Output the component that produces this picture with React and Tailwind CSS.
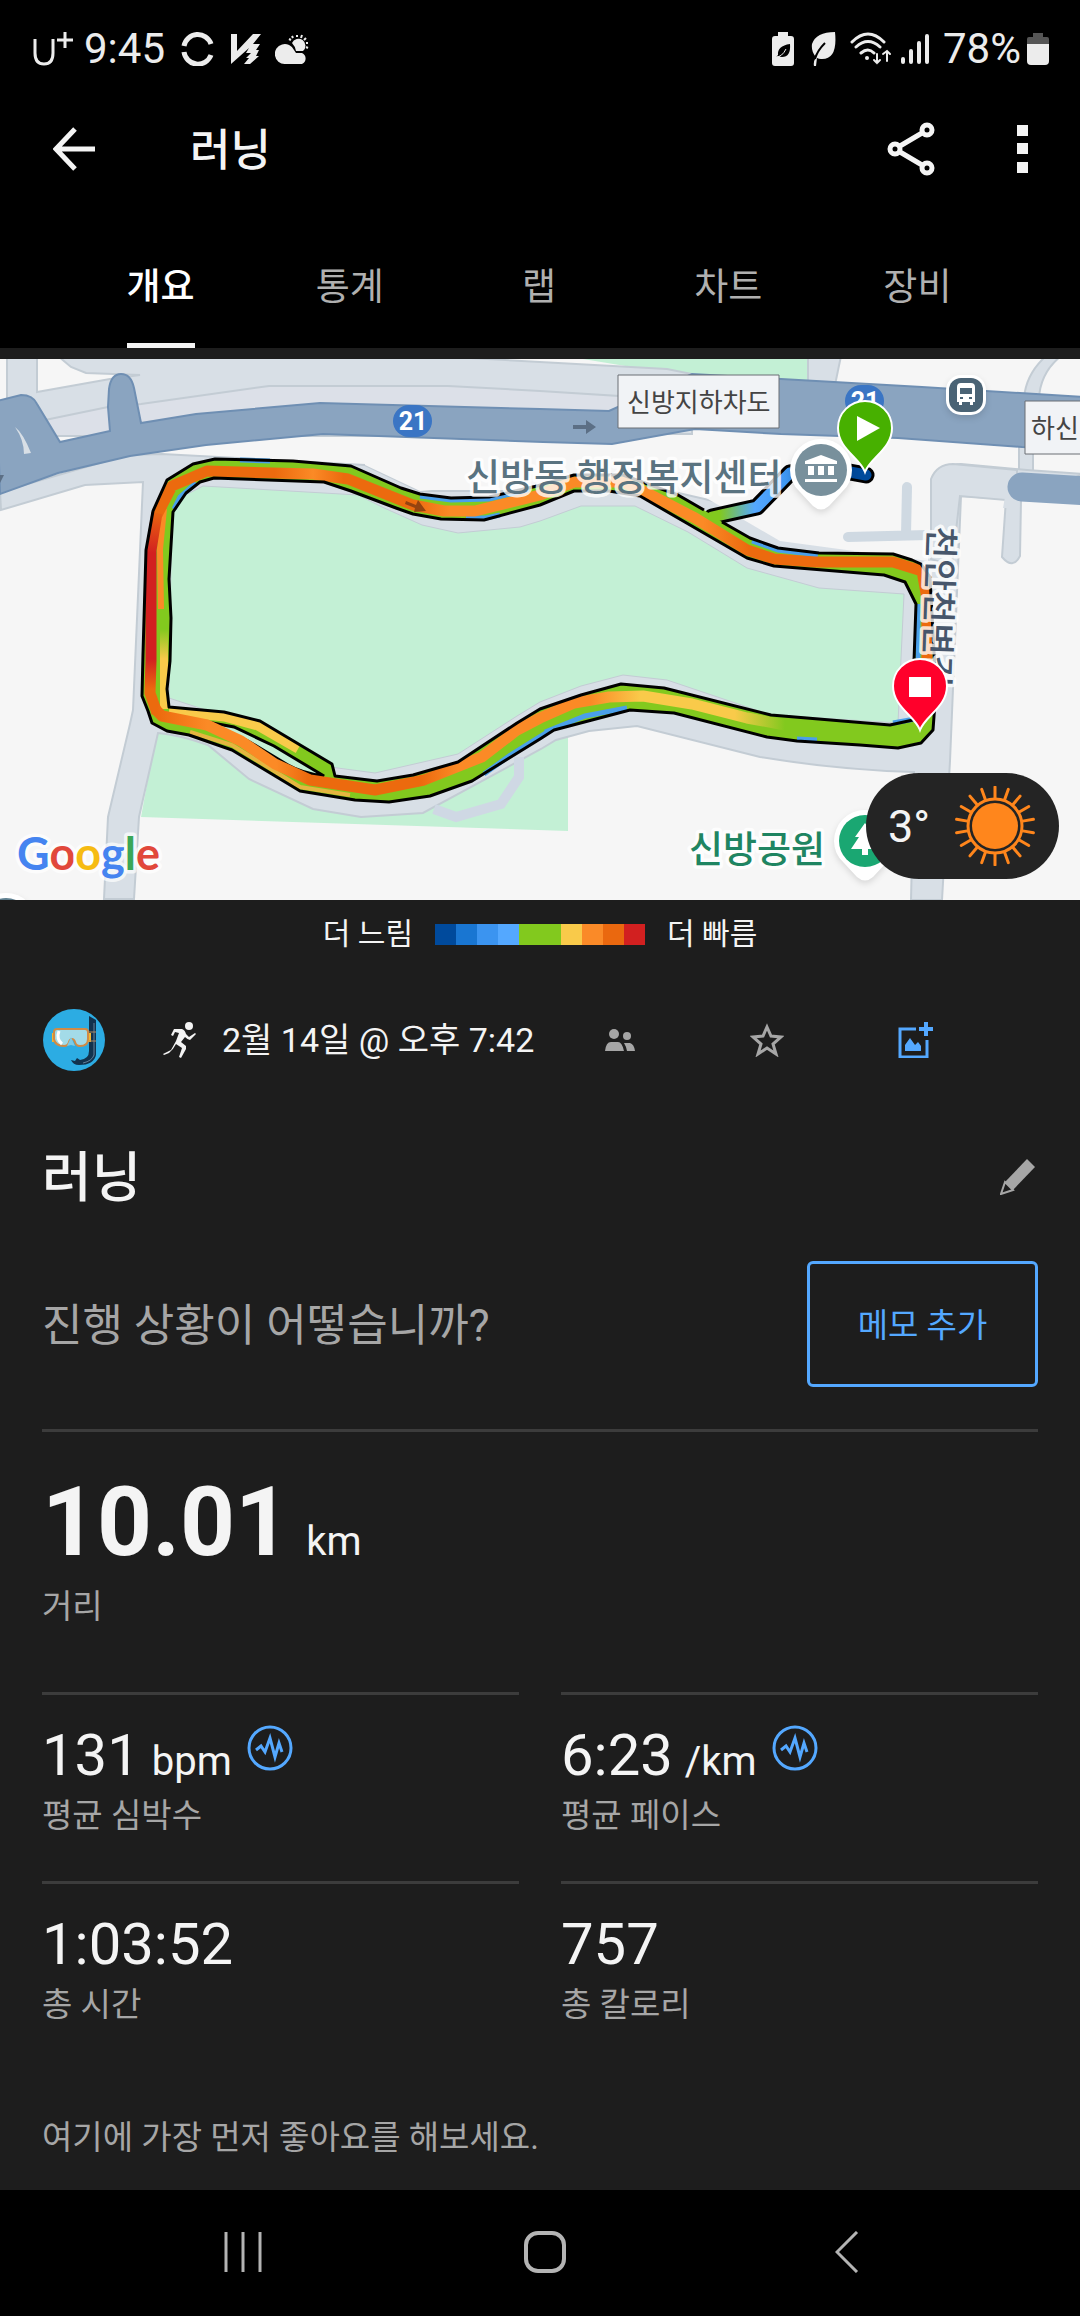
import { useState } from 'react';

const tabs = ['개요', '통계', '랩', '차트', '장비'];

const paceColors = [
  'bg-[#004a9c]',
  'bg-[#1976d2]',
  'bg-[#3b94f0]',
  'bg-[#54a8ff]',
  'bg-[#82c91e]',
  'bg-[#82c91e]',
  'bg-[#f9ca4a]',
  'bg-[#fa8a28]',
  'bg-[#ea680f]',
  'bg-[#d22020]',
];

const stats = [
  { value: '131', unit: 'bpm', label: '평균 심박수', chart: true },
  { value: '6:23', unit: '/km', label: '평균 페이스', chart: true },
  { value: '1:03:52', label: '총 시간' },
  { value: '757', label: '총 칼로리' },
];

// Both edges of the lap loop, the outer one is left open where the start spur joins
const trackEdges =
  'M722 163L750 179 778 189 819 194 893 195 912 201 921 205 930 218 936 330 933 371 921 384 898 389 860 386 797 382 767 378 674 354 630 351 554 371 540 380 472 422 430 437 389 443 355 441 300 432 232 391 189 376 167 372 152 364 148 352 142 337 143 295 146 191 153 152 167 121 193 105 215 100 293 102 351 107 401 129 420 135 451 139 489 138 537 127 574 116 623 116 678 136 704 151M214 119L324 123 351 132 396 149 413 155 441 160 484 161 540 146 574 132 609 132 640 137 747 199 774 207 884 216 905 223 916 245 914 302 913 361 890 366 771 356 664 329 621 325 581 336 540 350 517 364 458 403 413 416 377 422 335 417 332 405 260 362 224 353 169 348 167 330 170 302 171 259 169 220 173 153 186 134 200 123z';

const StatusBar = () => (
  <div className="flex h-[98px] items-center justify-between pl-8 pr-[31px] text-[42px] leading-none text-[#ececec]">
    <div className="flex items-center">
      <svg className="h-[36px] w-[42px]" viewBox="0 0 42 36" fill="none" stroke="currentColor" strokeWidth="3">
        <path d="M3 8v14q0 11 9 11t9-11V8M33 1v16M25 9h16" />
      </svg>
      <span className="ml-[10px]">9:45</span>
      <svg className="ml-4 h-[34px] w-[34px]" viewBox="0 0 34 34" fill="none" stroke="currentColor" strokeWidth="5">
        <path d="M3 14A14 14 0 0 1 30 12M3 20A14 14 0 0 0 30 23" />
      </svg>
      <svg className="ml-4 h-[32px] w-[30px]" viewBox="0 0 30 32" fill="currentColor">
        <path d="M0 1h6v17L22 1h8l-8 10h7l-4 6h3l-3 6h3l-9 8h-6l5-6h-3l5-5h-5l3-5L0 31z" />
      </svg>
      <svg className="ml-[14px] h-[30px] w-[34px]" viewBox="0 0 34 30" fill="currentColor">
        <path d="M10 30a10 10 0 1 1 9-14l2 3h6a6 6 0 0 1 0 11z" />
        <path d="M17 9a7 7 0 1 1 11 8h-7q-1-5-4-8z" />
        <path
          d="M22 1v2M27 1l-1 3M31 4l-2 2M33 9h-2M33 14l-2-1M17 2l1 2M14 5l2 1"
          stroke="currentColor"
          strokeWidth="2"
        />
      </svg>
    </div>
    <div className="flex items-center">
      <svg className="h-[34px] w-[22px]" viewBox="0 0 22 34" fill="currentColor">
        <path d="M6 0h10v4h3q3 0 3 3v24q0 3-3 3H3q-3 0-3-3V7q0-3 3-3h3z" />
        <path d="M18 12q1 13-8 13-2 0-3-1l-3 1q1-1 2-2-1-9 12-11z" fill="#000" />
        <path d="M4 25q6 0 10-8" stroke="#ececec" strokeWidth="1" fill="none" />
      </svg>
      <svg className="ml-[17px] h-[34px] w-[25px]" viewBox="0 0 25 34" fill="currentColor">
        <path d="M24 0q3 28-14 27-2 0-4-1L5 34H3q-1-4 2-9-5-5-4-13Q5 0 24 0z" />
        <path d="M14 11Q6 19 4 27" stroke="#000" strokeWidth="2" fill="none" />
      </svg>
      <svg
        className="ml-[14px] h-[34px] w-[42px]"
        viewBox="0 0 42 34"
        fill="none"
        stroke="currentColor"
        strokeWidth="3"
        strokeLinecap="round"
      >
        <path d="M2 10q16-16 32 0M6 15q12-11 24 0M11 21q7-6 13 0" />
        <path d="M27 22v9M24 28l3 3 3-3M37 29v-9M33 22l4-3 3 3" strokeWidth="2" />
        <circle cx="17" cy="26" r="2" fill="currentColor" stroke="none" />
      </svg>
      <svg
        className="ml-[9px] h-[32px] w-[28px]"
        viewBox="0 0 28 32"
        stroke="currentColor"
        strokeWidth="4"
        strokeLinecap="round"
      >
        <path d="M2 26v3M10 18v11M18 10v19M26 3v26" />
      </svg>
      <span className="ml-[14px]">78%</span>
      <svg className="ml-[6px] h-[32px] w-[22px]" viewBox="0 0 22 32" fill="currentColor">
        <path d="M6 0h10v4h4q2 0 2 2v5H0V6q0-2 2-2h4z" fill="#555" />
        <path d="M0 11h22v17q0 4-4 4H4q-4 0-4-4z" />
      </svg>
    </div>
  </div>
);

const AppBar = () => (
  <header className="flex h-[102px] items-center pl-[53px] pr-[51px] text-[#f4f4f4]">
    <button aria-label="뒤로">
      <svg className="h-[44px] w-[42px]" viewBox="0 0 42 44" fill="none" stroke="currentColor" strokeWidth="5">
        <path d="M42 22H4M22 2L3 22l19 20" />
      </svg>
    </button>
    <h1 className="ml-[95px] pt-1 text-[44px] font-medium leading-none">러닝</h1>
    <button className="ml-auto" aria-label="공유">
      <svg className="h-[54px] w-[48px]" viewBox="0 0 48 54" fill="none" stroke="currentColor" strokeWidth="5">
        <circle cx="8" cy="27" r="5" />
        <circle cx="40" cy="8" r="5" />
        <circle cx="40" cy="46" r="5" />
        <path d="M13 24L35 11M13 30l22 13" />
      </svg>
    </button>
    <button className="ml-[82px]" aria-label="더보기">
      <svg className="h-[48px] w-[12px]" viewBox="0 0 12 48" fill="currentColor">
        <path d="M0 0h11v11H0zM0 18h11v11H0zM0 37h11v11H0z" />
      </svg>
    </button>
  </header>
);

const MapPin = ({ x, y, color, children }) => (
  <g transform={`translate(${x} ${y})`}>
    <path
      d="M0 43C-5 29-27 20-27-1a27 27 0 0 1 54 0C27 20 5 29 0 43z"
      fill={color}
      stroke="#fff"
      strokeWidth="2"
    />
    {children}
  </g>
);

const PlaceMarker = ({ x, y, color, children }) => (
  <g transform={`translate(${x} ${y})`}>
    <path
      d="M-31 0a31 31 0 1 1 62 0q0 13-10 22L8 36q-8 7-16 0l-13-14Q-31 13-31 0z"
      fill="#fff"
      className="drop-shadow-md"
    />
    <circle r="26" fill={color} />
    {children}
  </g>
);

const RouteMap = () => (
  <svg className="block h-auto w-full" viewBox="0 0 1080 541" role="img" aria-label="경로 지도">
    <defs>
      <linearGradient id="top" gradientUnits="userSpaceOnUse" x1="160" y1="0" x2="925" y2="0">
        <stop offset="0.15" stopColor="#ec6a0e" />
        <stop offset="0.2" stopColor="#fb8a26" />
        <stop offset="0.24" stopColor="#ec6a0e" />
        <stop offset="0.33" stopColor="#ec6a0e" />
        <stop offset="0.38" stopColor="#fb8a26" />
        <stop offset="0.71" stopColor="#fb8a26" />
        <stop offset="0.77" stopColor="#ec6a0e" />
      </linearGradient>
      <linearGradient id="left" gradientUnits="userSpaceOnUse" x1="0" y1="150" x2="0" y2="350">
        <stop offset="0" stopColor="#ec6a0e" />
        <stop offset="0.22" stopColor="#d22020" />
        <stop offset="0.75" stopColor="#d22020" />
        <stop offset="0.9" stopColor="#ec6a0e" />
      </linearGradient>
      <linearGradient id="leftInner" gradientUnits="userSpaceOnUse" x1="0" y1="150" x2="0" y2="350">
        <stop offset="0.3" stopColor="#82c91e" />
        <stop offset="0.6" stopColor="#82c91e" />
        <stop offset="0.75" stopColor="#f9ca4a" />
      </linearGradient>
      <linearGradient id="bottom" gradientUnits="userSpaceOnUse" x1="157" y1="0" x2="785" y2="0">
        <stop offset="0" stopColor="#ec6a0e" />
        <stop offset="0.08" stopColor="#fb8a26" />
        <stop offset="0.19" stopColor="#fb8a26" />
        <stop offset="0.24" stopColor="#ec6a0e" />
        <stop offset="0.42" stopColor="#ec6a0e" />
        <stop offset="0.48" stopColor="#fb8a26" />
        <stop offset="0.69" stopColor="#fb8a26" />
        <stop offset="0.77" stopColor="#f9ca4a" />
        <stop offset="0.92" stopColor="#f9ca4a" />
        <stop offset="1" stopColor="#82c91e" />
      </linearGradient>
      <linearGradient id="start" gradientUnits="userSpaceOnUse" x1="715" y1="0" x2="868" y2="0">
        <stop offset="0.03" stopColor="#82c91e" />
        <stop offset="0.26" stopColor="#54a8ff" />
        <stop offset="0.5" stopColor="#3b94f0" />
        <stop offset="0.8" stopColor="#004a9c" />
      </linearGradient>
    </defs>

    <path fill="#f6f6f6" d="M0 0h1080v541H0z" />
    <path fill="#c3f0d5" d="M583 0h227l-2 26-116-8zM157 370h411v102L141 458z" />

    {/* side roads */}
    <g fill="#d8dfe6" stroke="#c3ccd4" strokeWidth="2">
      <path d="M7-3h30v36l73-13 30-4-54-2-15-6-13-11h376l106 6 127 7 25 5v60H0V45h7z" />
      <path d="M45 61l63-13 33-3 128-18h179l92 5 79 5v40H45z" fill="#dce0e8" />
      <path d="M808-3v27l27 2 6-29zM1046-3q-20 18-22 42l15 1q1-26 22-43zM1019 86v26h14V86z" />
      <path d="M0 133l127-37 35-1 203 11 55 26 250 0 260 60 8-22 1-50q6-15 22-15l66 6 56 4-62 26-1 56q-7 14-18 1l4-58-45-3-11 265-8 139h-31l3-128q-76-2-154-15l-123-31-48 5-33 9-15 9-118 64-62 4-48-8-64-30-41-34q-28-10-50-12l-19 84-5 82h-30l4-82 22-93 3-14 10-228-58 3-84 25z" />
    </g>
    <path d="M365 106l55 26 240-20 120 70 148 20V105H365z" fill="#f6f6f6" />
    <path
      d="M931 200V120q6-15 22-15l64 6v31l-57-5-8 70z"
      fill="#d8dfe6"
      stroke="#c3ccd4"
      strokeWidth="2"
    />
    <path d="M1005 138l15 1-5 10h-12z" fill="#d8dfe6" />
    <path d="M848 178l80-2M907 128l-1 48" stroke="#cfd9e2" strokeWidth="10" strokeLinecap="round" />

    {/* highway */}
    <path
      d="M-3 42l24-6q12 0 16 9l23 38 50-11-2-24 1-18q2-15 12-15t13 14l7 35 55-9 124-11 220 6 69 2 83-37 89 5 141 8 161 10v53l-61-3-124-9-117-4-86-5-83 15-69-2-220-8-117 11-76 11-72 17-58 21z"
      fill="#8aa4c0"
      stroke="#6f8fb3"
      strokeWidth="2"
    />
    <path d="M15 68q8 6 16 26l-7 1q0-14-9-27z" fill="#d8dfe6" />
    <path d="M1090 132l-68-4" stroke="#8aa4c0" strokeWidth="29" strokeLinecap="round" />
    <path d="M573 66h13v-5l10 7-10 7v-5h-13zM0 116h4l-4 8z" fill="#5c6f85" />
    <path d="M434 450l22 8 45-13 18-27v-20" fill="none" stroke="#cfd8e4" strokeWidth="10" />

    {/* park */}
    <path
      d="M203 127l155 9 24 12 40 18 36 8 62-6 20-6 41-15h54l53 26 59 36 72 20 85 6-6 129-127-8-104-35-44-5-42 11-41 16-23 14-59 38-83 19-82-11-69-46-55-18 3-196z"
      fill="#c3f0d5"
      stroke="#c3ccd4"
      strokeWidth="1"
    />

    {/* recorded track */}
    <path
      d="M712 158l45-10 33-34 38-5 38 7"
      fill="none"
      stroke="#000"
      strokeWidth="17"
      strokeLinejoin="round"
      strokeLinecap="round"
    />
    <path d={trackEdges} fill="#82c91e" fillRule="evenodd" />
    <path
      d="M712 158l45-10 33-34 38-5 38 7"
      fill="none"
      stroke="url(#start)"
      strokeWidth="11"
      strokeLinejoin="round"
      strokeLinecap="round"
    />
    <path
      d="M174 150l6-12 16-14M240 101l30 1M420 137l31 4 38-1 40-9M466 159l20 0 14-3M752 182l26 9 40 5M918 245v60M797 380l20 1M552 370l-40 25-28 20M545 373l40-16 42-8M893 364l22-4"
      fill="none"
      stroke="#4a9fea"
      strokeWidth="5"
    />
    <path d="M169 352l55 6 34 9 40 23" fill="none" stroke="#f9ca4a" strokeWidth="9" />
    <path d="M190 373l42 13 68 42 50 8" fill="none" stroke="#e5b540" strokeWidth="4" />
    <path d="M164 160v190" fill="none" stroke="url(#leftInner)" strokeWidth="8" />
    <path d="M164 150l-4 40 1 60" fill="none" stroke="#fb8a26" strokeWidth="6" />
    <path
      d="M157 156L172 127 207 112 272 114 313 115 348 120 413 146 444 152 475 152 540 136 574 123 623 123 643 132 695 159 747 191 774 200 815 203 893 203 922 212 927 240 927 340"
      fill="none"
      stroke="url(#top)"
      strokeWidth="11"
      strokeLinejoin="round"
    />
    <path d="M157 154L151 191 151 302 150 334 157 354" fill="none" stroke="url(#left)" strokeWidth="11" />
    <path d="M207 363l27 5 40 19 50 30q-22-3-36-11l-40-24z" fill="#c3f0d5" stroke="#000" strokeWidth="3" />
    <path
      d="M155 350L162 357 207 366 241 382 275 405 310 421 375 431 424 421 482 398 517 371 540 359 574 344 609 338 643 337 692 345 747 359 785 366"
      fill="none"
      stroke="url(#bottom)"
      strokeWidth="11"
      strokeLinejoin="round"
    />
    <path d={trackEdges} fill="none" stroke="#000" strokeWidth="3" strokeLinejoin="round" />
    <path d="M406 142l10 4 2-5 8 11-12 1 1-4-10-4z" fill="#944310" />

    {/* road shields */}
    <g className="text-[25px] font-bold" fill="#fff" textAnchor="middle">
      <rect x="393" y="46" width="39" height="32" rx="16" fill="#3a75c4" />
      <text x="413" y="71">21</text>
      <rect x="845" y="26" width="39" height="32" rx="16" fill="#3a75c4" />
      <text x="865" y="51">21</text>
    </g>

    {/* labels */}
    <g fill="#f1f3f6" stroke="#6b6f74" strokeWidth="1">
      <path d="M618 16h161v53H618zM1025 42h60v53h-60z" />
    </g>
    <g className="text-[26px]" fill="#444">
      <text x="627" y="53">신방지하차도</text>
      <text x="1031" y="79">하신</text>
    </g>
    <g
      className="text-[37px] font-medium"
      stroke="#fff"
      strokeOpacity="0.8"
      strokeWidth="7"
      strokeLinejoin="round"
      paintOrder="stroke"
    >
      <text x="466" y="132" fill="#5a7380">신방동 행정복지센터</text>
      <text x="689" y="504" fill="#1f8562">신방공원</text>
      <text className="text-[35px]" transform="translate(929 167) rotate(92)" fill="#47566b">천안천변길</text>
    </g>
    <text
      className="font-['Lato'] text-[45px] font-bold"
      x="17"
      y="511"
      stroke="#fff"
      strokeOpacity="0.7"
      strokeWidth="7"
      strokeLinejoin="round"
      paintOrder="stroke"
    >
      <tspan fill="#4584f0">G</tspan>
      <tspan fill="#e1483b">o</tspan>
      <tspan fill="#f6bb12">o</tspan>
      <tspan fill="#4584f0">g</tspan>
      <tspan fill="#3aa757">l</tspan>
      <tspan fill="#e1483b">e</tspan>
    </text>

    {/* places */}
    <PlaceMarker x={821} y={111} color="#78909c">
      <path d="M-16-6v-3L0-15l16 6v3zM-13-4h6V5h-6zM-3-4h6V5h-6zM7-4h6V5H7zM-16 9h32v3h-32z" fill="#fff" />
    </PlaceMarker>
    <PlaceMarker x={865} y={482} color="#1aa772">
      <path d="M0-18L10-4H6l8 12H3v6h-6V8h-11l8-12h-4z" fill="#fff" />
    </PlaceMarker>
    <PlaceMarker x={6} y={565} color="#5f7f8f" />
    <g transform="translate(966 36)">
      <rect x="-20" y="-20" width="40" height="40" rx="15" fill="#fff" className="drop-shadow-md" />
      <rect x="-17" y="-17" width="34" height="34" rx="12" fill="#4a6375" />
      <path
        d="M-9-8q0-4 4-4H5q4 0 4 4V7H7v3H4V7h-8v3h-3V7h-2zM-6-7v6H6v-6zM-6 2v2h3V2zM3 2v2h3V2z"
        fill="#fff"
        fillRule="evenodd"
      />
    </g>

    <MapPin x={865} y={70} color="#47b000">
      <path d="M-8-13L15-1-8 12z" fill="#fff" />
    </MapPin>
    <MapPin x={920} y={328} color="#ff002b">
      <path d="M-11-10h22v20h-22z" fill="#fff" />
    </MapPin>
  </svg>
);

const WeatherBadge = () => {
  const rays = Array.from({ length: 18 }, (_, i) => i * 20);
  return (
    <div className="absolute bottom-[21px] right-[21px] flex h-[106px] w-[193px] items-center justify-between rounded-full bg-[#242424] pl-[22px] pr-6 text-[45px] leading-none text-[#f4f4f4]">
      3°
      <svg className="h-[80px] w-[80px]" viewBox="-40 -40 80 80" fill="none" stroke="#ff861c">
        <circle r="23" fill="#ff861c" stroke="none" />
        <circle r="27" strokeWidth="3" />
        {rays.map((angle) => (
          <path key={angle} d="M0-28V-39" strokeWidth="3" strokeLinecap="round" transform={`rotate(${angle})`} />
        ))}
      </svg>
    </div>
  );
};

const PaceLegend = () => (
  <div className="flex h-[68px] items-center justify-center text-[30px] leading-none text-[#f4f4f4]">
    <span>더 느림</span>
    <div className="mx-[22px] flex">
      {paceColors.map((color, index) => (
        <div key={index} className={`h-[21px] w-[21px] ${color}`} />
      ))}
    </div>
    <span>더 빠름</span>
  </div>
);

const Avatar = () => (
  <svg className="ml-px h-[62px] w-[62px]" viewBox="0 0 62 62">
    <circle cx="31" cy="31" r="31" fill="#2cace3" />
    <path d="M46 7l7 4v35q-2 10-17 10-6 0-8-5l4 1 2-3 3 2q9-1 9-9z" fill="#12324d" />
    <path d="M51 14v32q-2 6-11 8" fill="none" stroke="#64809a" strokeWidth="1" />
    <path d="M9 24h4v9H9zM44 24h4v9h-4z" fill="#f2b632" />
    <path d="M46 23h7M46 32h7" stroke="#b08b63" strokeWidth="1" />
    <path
      d="M14 20h28q3 0 3 3v7q0 7-8 7-4 0-5-4-1-3-3-3t-3 3q-1 4-5 4-9 0-10-7v-7q0-3 3-3z"
      fill="#a3dbe8"
      stroke="#d08b46"
      strokeWidth="2"
    />
    <path d="M16 22q-3 8 3 13" fill="none" stroke="#fff" strokeWidth="3" />
    <path d="M28 28l-4 9 4-1 4 1z" fill="#7ccbe6" />
  </svg>
);

const ActivityMeta = () => (
  <div className="flex h-[144px] items-center">
    <Avatar />
    <svg className="ml-[58px] h-[36px] w-[34px] text-[#f4f4f4]" viewBox="0 0 34 36" fill="currentColor">
      <circle cx="26" cy="4" r="4" />
      <path d="M11 7l8 0q3 1 4 5l3 3 6-4 1 1-6 6q-2 0-5-3l-4 5 5 4v3l-5 9-2-1 3-9-6-4q-3 6-7 9L1 33l-1-1 8-4 5-9 3-8-4-1-2 4-2-1z" />
    </svg>
    <time className="ml-[25px] text-[34px] leading-none text-[#f4f4f4]">2월 14일 @ 오후 7:42</time>
    <button className="ml-[71px] text-[#a6a6a6]" aria-label="공개 범위">
      <svg className="h-[24px] w-[30px]" viewBox="0 0 30 24" fill="currentColor">
        <circle cx="9" cy="6" r="5" />
        <circle cx="22" cy="8" r="4" />
        <path d="M0 23q1-9 6-9h7q4 0 6 9zM19 15h6q4 1 5 8h-8q-1-5-3-8z" />
      </svg>
    </button>
    <button className="ml-[115px] text-[#a6a6a6]" aria-label="즐겨찾기">
      <svg className="h-[34px] w-[34px]" viewBox="0 0 34 34" fill="none" stroke="currentColor" strokeWidth="3">
        <path d="M17 4l4 9 10 1-8 7 3 10-9-6-9 6 3-10-8-7 10-1z" />
      </svg>
    </button>
    <button className="ml-[114px] text-[#54a8ff]" aria-label="사진 추가">
      <svg className="h-[36px] w-[36px]" viewBox="0 0 36 36" fill="none" stroke="currentColor" strokeWidth="3">
        <path d="M18 7H2v28h27V18" />
        <path d="M28 0v14M21 7h14" strokeWidth="4" />
        <path d="M7 29v-6l5-7 5 7 3-3 3 4v5z" fill="currentColor" stroke="none" />
      </svg>
    </button>
  </div>
);

const Stat = ({ value, unit, label, chart }) => (
  <div className="h-[189px] border-t-[3px] border-[#3c3c3c] pt-[30px]">
    <div className="flex h-[60px] items-baseline text-[#f4f4f4]">
      <span className="text-[58px] leading-[60px]">{value}</span>
      {unit && <span className="ml-3 text-[40px] leading-none">{unit}</span>}
      {chart && (
        <button className="ml-[15px] self-start text-[#54a8ff]" aria-label={`${label} 차트`}>
          <svg className="h-[46px] w-[46px]" viewBox="0 0 46 46" fill="none" stroke="currentColor" strokeWidth="3">
            <circle cx="23" cy="23" r="21" />
            <path d="M9 25l5-4 4 6 5-14 5 19 4-14 3 9" />
          </svg>
        </button>
      )}
    </div>
    <p className="mt-[11px] text-[33px] leading-[40px] text-[#a6a6a6]">{label}</p>
  </div>
);

const NavigationBar = () => (
  <nav className="grid h-[126px] grid-cols-3 items-center bg-black pb-0.5 pl-[92px] pr-[82px] text-[#b4b4b4]">
    <button className="justify-self-center" aria-label="최근 앱">
      <svg className="h-[42px] w-[38px]" viewBox="0 0 38 42" stroke="currentColor" strokeWidth="3">
        <path d="M2 1v40M19 1v40M36 1v40" />
      </svg>
    </button>
    <button className="justify-self-center" aria-label="홈">
      <svg className="h-[42px] w-[42px]" viewBox="0 0 42 42" fill="none" stroke="currentColor" strokeWidth="4">
        <rect x="2" y="2" width="38" height="38" rx="12" />
      </svg>
    </button>
    <button className="justify-self-center" aria-label="뒤로 가기">
      <svg className="h-[42px] w-[24px]" viewBox="0 0 24 42" fill="none" stroke="currentColor" strokeWidth="3">
        <path d="M22 1L2 21l20 20" />
      </svg>
    </button>
  </nav>
);

const App = () => {
  const [activeTab, setActiveTab] = useState(tabs[0]);

  return (
    <div className="flex min-h-screen flex-col bg-[#1d1d1d] font-[Roboto,'Noto_Sans_CJK_KR',sans-serif]">
      <div className="bg-black">
        <StatusBar />
        <AppBar />
        <div className="grid grid-cols-5 pl-[66px] pr-[68px] pt-6" role="tablist">
          {tabs.map((tab) => (
            <button
              key={tab}
              role="tab"
              aria-selected={tab === activeTab}
              onClick={() => setActiveTab(tab)}
              className={`h-[124px] justify-self-center border-b-[5px] pt-[7px] text-[37px] leading-none ${
                tab === activeTab ? 'border-[#f4f4f4] font-medium text-white' : 'border-transparent text-[#b0b0b0]'
              }`}
            >
              {tab}
            </button>
          ))}
        </div>
      </div>

      <main className="flex-1">
        <div className="relative mt-[11px]">
          <RouteMap />
          <WeatherBadge />
        </div>
        <PaceLegend />

        <div className="px-[42px]">
          <ActivityMeta />
          <div className="flex h-[130px] items-center justify-between pr-0.5">
            <h2 className="pt-1 text-[54px] font-medium leading-none text-[#f4f4f4]">러닝</h2>
            <button className="text-[#a6a6a6]" aria-label="이름 편집">
              <svg className="h-[36px] w-[36px]" viewBox="0 0 36 36" fill="currentColor">
                <path d="M27 0l8 8-22 23-8-8z" />
                <path d="M5 23L1 35l12-4z" fill="none" stroke="currentColor" strokeWidth="2" />
              </svg>
            </button>
          </div>
          <div className="flex h-[163px] items-center justify-between">
            <p className="pt-1 text-[44px] leading-none text-[#a6a6a6]">진행 상황이 어떻습니까?</p>
            <button className="h-[126px] w-[231px] rounded-md border-[3px] border-[#54a8ff] pt-1 text-[33px] leading-none text-[#54a8ff]">
              메모 추가
            </button>
          </div>

          <section className="mt-6 h-[263px] border-t-[3px] border-[#3c3c3c] pt-[41px]">
            <div className="flex items-baseline text-[#f4f4f4]">
              <span className="text-[96px] font-bold leading-[98px]">10.01</span>
              <span className="ml-4 text-[40px] leading-none">km</span>
            </div>
            <p className="mt-4 text-[33px] leading-[40px] text-[#a6a6a6]">거리</p>
          </section>

          <section className="grid grid-cols-2 gap-x-[42px]">
            {stats.map((stat) => (
              <Stat key={stat.label} {...stat} />
            ))}
          </section>

          <p className="mt-12 text-[33px] leading-[40px] text-[#a6a6a6]">여기에 가장 먼저 좋아요를 해보세요.</p>
        </div>
      </main>

      <NavigationBar />
    </div>
  );
};

export default App;
